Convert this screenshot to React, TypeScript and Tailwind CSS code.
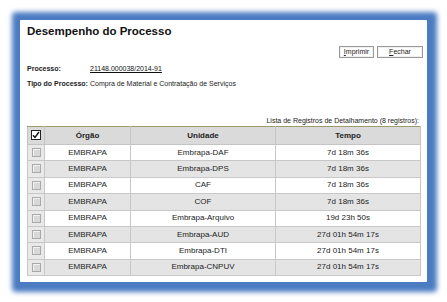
import React from 'react';

const rows = [
  { orgao: 'EMBRAPA', unidade: 'Embrapa-DAF', tempo: '7d 18m 36s' },
  { orgao: 'EMBRAPA', unidade: 'Embrapa-DPS', tempo: '7d 18m 36s' },
  { orgao: 'EMBRAPA', unidade: 'CAF', tempo: '7d 18m 36s' },
  { orgao: 'EMBRAPA', unidade: 'COF', tempo: '7d 18m 36s' },
  { orgao: 'EMBRAPA', unidade: 'Embrapa-Arquivo', tempo: '19d 23h 50s' },
  { orgao: 'EMBRAPA', unidade: 'Embrapa-AUD', tempo: '27d 01h 54m 17s' },
  { orgao: 'EMBRAPA', unidade: 'Embrapa-DTI', tempo: '27d 01h 54m 17s' },
  { orgao: 'EMBRAPA', unidade: 'Embrapa-CNPUV', tempo: '27d 01h 54m 17s' },
];

const RowCheck = () => (
  <span className="inline-block w-[9px] h-[9px] border border-[#a9a9a9] bg-[#d8d8d8] shadow-[inset_1px_1px_0_#f2f2f2] align-middle" />
);

const HeadCheck = () => (
  <span className="inline-flex w-[10px] h-[10px] border border-[#222] bg-white items-center justify-center align-middle">
    <svg width="8" height="8" viewBox="0 0 8 8">
      <path d="M1 4.2 L3 6.5 L7 1" fill="none" stroke="#111" strokeWidth="1.4" />
    </svg>
  </span>
);

const Btn = ({ first, rest, w }: { first: string; rest: string; w: string }) => (
  <button className={`${w} h-[12px] border border-[#9a9a9a] bg-white shadow-[inset_0_0_0_1px_#f0f0f0] text-[7px] leading-[10px] text-[#222] text-center`}>
    <span className="underline">{first}</span>
    {rest}
  </button>
);

export default function App() {
  return (
    <div className="w-[447px] h-[302px] bg-white pt-[20px] pl-[20px]" style={{ fontFamily: '"Liberation Sans", Arial, sans-serif' }}>
      <div className="w-[407px] h-[262px] bg-white rounded-[1px] shadow-[1px_1px_5px_9px_#4b7cc2] px-[7px] pt-[4px] text-[#222]">
        <h1 className="text-[11.5px] leading-[15px] font-bold text-[#111]">Desempenho do Processo</h1>

        <div className="flex justify-end gap-[3px] mt-[7px] mr-[-3px]">
          <Btn first="I" rest="mprimir" w="w-[35px]" />
          <Btn first="F" rest="echar" w="w-[46px]" />
        </div>

        <div className="mt-[3px] text-[7px] leading-[15px]">
          <div className="flex">
            <span className="w-[63px] font-bold">Processo:</span>
            <span className="underline text-[#111]">21148.000038/2014-91</span>
          </div>
          <div className="flex">
            <span className="w-[63px] font-bold">Tipo do Processo:</span>
            <span>Compra de Material e Contratação de Serviços</span>
          </div>
        </div>

        <div className="mt-[25px] text-right text-[7px] leading-[10px] pr-[1px]">
          Lista de Registros de Detalhamento (8 registros):
        </div>

        <table className="mt-[0px] w-[394px] border-collapse text-[8px] text-center border border-[#bcbcbc] border-t-[#9b9b6e]">
          <thead>
            <tr className="h-[18px] bg-[#dadada] font-bold">
              <th className="w-[17px] border border-[#c4c4c4] border-t-[#9b9b6e]"><HeadCheck /></th>
              <th className="w-[86px] border border-[#c4c4c4] border-t-[#9b9b6e]">Órgão</th>
              <th className="w-[145px] border border-[#c4c4c4] border-t-[#9b9b6e]">Unidade</th>
              <th className="border border-[#c4c4c4] border-t-[#9b9b6e]">Tempo</th>
            </tr>
          </thead>
          <tbody>
            {rows.map((r, i) => (
              <tr key={i} className={i % 2 === 0 ? 'h-[16.4px] bg-white' : 'h-[16.4px] bg-[#e4e4e4]'}>
                <td className="border border-[#c8c8c8] bg-[#e9e9e9]"><RowCheck /></td>
                <td className="border border-[#c8c8c8]">{r.orgao}</td>
                <td className="border border-[#c8c8c8]">{r.unidade}</td>
                <td className="border border-[#c8c8c8]">{r.tempo}</td>
              </tr>
            ))}
          </tbody>
        </table>
      </div>
    </div>
  );
}
